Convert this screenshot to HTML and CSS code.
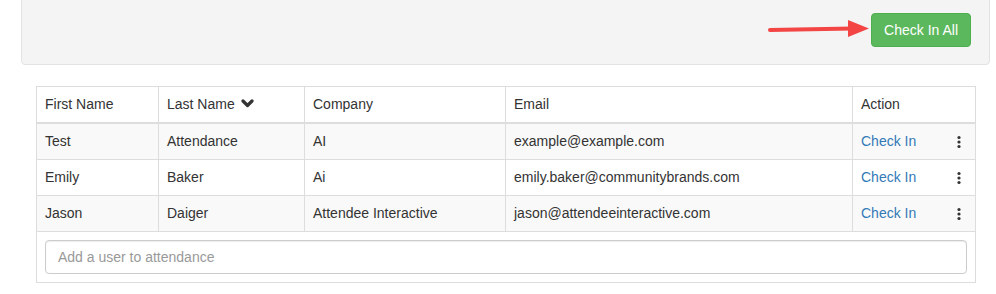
FILE: index.html
```html
<!DOCTYPE html>
<html lang="en">
<head>
  <meta charset="UTF-8">
  <title>Attendance</title>
  <link rel="stylesheet" href="styles.css">
</head>
<body>
  <div class="page">
    <div class="well">
      <div class="toolbar">
        <svg class="arrow" width="102" height="20" viewBox="0 0 102 20">
          <line x1="2" y1="11" x2="84" y2="9.5" stroke="#f44545" stroke-width="4" stroke-linecap="round"></line>
          <polygon points="80,1 101,9.5 80,18" fill="#f44545"></polygon>
        </svg>
        <button class="btn btn-success">Check In All</button>
      </div>
    </div>

    <div class="table-wrap">
      <table class="attendance">
        <colgroup>
          <col style="width:122px">
          <col style="width:146px">
          <col style="width:201px">
          <col style="width:347px">
          <col style="width:123px">
        </colgroup>
        <thead>
          <tr>
            <th>First Name</th>
            <th>Last Name
              <svg class="chevron" width="13" height="9" viewBox="0 0 13 9">
                <polyline points="2,2 6.5,6.5 11,2" fill="none" stroke="#333" stroke-width="3.2" stroke-linecap="round" stroke-linejoin="round"></polyline>
              </svg>
            </th>
            <th>Company</th>
            <th>Email</th>
            <th>Action</th>
          </tr>
        </thead>
        <tbody>
          <tr>
            <td>Test</td>
            <td>Attendance</td>
            <td>AI</td>
            <td>example@example.com</td>
            <td>
              <div class="action">
                <a href="#">Check In</a>
                <span class="kebab"><svg width="4" height="14" viewBox="0 0 4 14"><circle cx="2" cy="2.5" r="1.6"/><circle cx="2" cy="7" r="1.6"/><circle cx="2" cy="11.5" r="1.6"/></svg></span>
              </div>
            </td>
          </tr>
          <tr>
            <td>Emily</td>
            <td>Baker</td>
            <td>Ai</td>
            <td>emily.baker@communitybrands.com</td>
            <td>
              <div class="action">
                <a href="#">Check In</a>
                <span class="kebab"><svg width="4" height="14" viewBox="0 0 4 14"><circle cx="2" cy="2.5" r="1.6"/><circle cx="2" cy="7" r="1.6"/><circle cx="2" cy="11.5" r="1.6"/></svg></span>
              </div>
            </td>
          </tr>
          <tr>
            <td>Jason</td>
            <td>Daiger</td>
            <td>Attendee Interactive</td>
            <td>jason@attendeeinteractive.com</td>
            <td>
              <div class="action">
                <a href="#">Check In</a>
                <span class="kebab"><svg width="4" height="14" viewBox="0 0 4 14"><circle cx="2" cy="2.5" r="1.6"/><circle cx="2" cy="7" r="1.6"/><circle cx="2" cy="11.5" r="1.6"/></svg></span>
              </div>
            </td>
          </tr>
          <tr class="add-row">
            <td colspan="5">
              <input type="text" class="form-control" placeholder="Add a user to attendance">
            </td>
          </tr>
        </tbody>
      </table>
    </div>
  </div>
</body>
</html>
```

FILE: styles.css
```css
* {
  margin: 0;
  padding: 0;
  box-sizing: border-box;
}

body {
  font-family: 'Liberation Sans', Arial, sans-serif;
  font-size: 14px;
  line-height: 20px;
  color: #333;
  background: #fff;
  overflow: hidden;
}

.page {
  padding: 0 6px 0 21px;
}

.well {
  margin-top: -7px;
  padding: 19px 18px 17px 19px;
  background: #f4f4f4;
  border: 1px solid #e3e3e3;
  border-radius: 4px;
  box-shadow: inset 0 1px 1px rgba(0, 0, 0, 0.05);
}

.toolbar {
  display: flex;
  justify-content: flex-end;
  align-items: center;
  gap: 1px;
}

.arrow {
  display: block;
  margin-top: -2px;
}

.btn {
  font-family: inherit;
  font-size: 14px;
  line-height: 20px;
  padding: 6px 12px;
  border-radius: 4px;
  border: 1px solid transparent;
  cursor: pointer;
}

.btn-success {
  color: #fff;
  background: #5cb85c;
  border-color: #4cae4c;
}

.table-wrap {
  padding: 21px 15px 0 15px;
}

.attendance {
  width: 939px;
  table-layout: fixed;
  border-collapse: collapse;
  border: 1px solid #ddd;
}

.attendance th,
.attendance td {
  padding: 8px;
  line-height: 19px;
  border: 1px solid #ddd;
  text-align: left;
  font-weight: normal;
  vertical-align: middle;
  white-space: nowrap;
}

.attendance thead th {
  border-bottom: 2px solid #ddd;
}

.attendance tbody tr:nth-child(odd) {
  background: #f9f9f9;
}

.attendance tbody tr.add-row {
  background: #fff;
}

.chevron {
  margin-left: 2px;
  vertical-align: 1px;
}

.action {
  display: flex;
  justify-content: space-between;
  align-items: center;
}

.action a {
  color: #337ab7;
  text-decoration: none;
}

.kebab {
  display: flex;
  justify-content: center;
  width: 16px;
  fill: #333;
}

.kebab svg {
  display: block;
}

.form-control {
  display: block;
  width: 100%;
  height: 34px;
  padding: 6px 12px;
  font-family: inherit;
  font-size: 14px;
  color: #555;
  background: #fff;
  border: 1px solid #ccc;
  border-radius: 4px;
  box-shadow: inset 0 1px 1px rgba(0, 0, 0, 0.075);
}

.form-control::placeholder {
  color: #999;
}
```
